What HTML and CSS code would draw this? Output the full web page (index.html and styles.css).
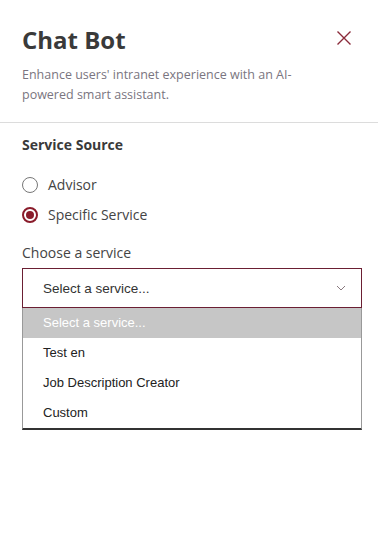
FILE: index.html
```html
<!DOCTYPE html>
<html>
<head>
<meta charset="utf-8">
<link rel="stylesheet" href="styles.css">
</head>
<body>
<div class="panel">
  <header class="head">
    <div class="title-row">
      <h1 class="title">Chat Bot</h1>
      <button class="close" aria-label="Close">
        <svg width="16" height="16" viewBox="0 0 16 16"><path d="M1.5 1.5 L14.5 14.5 M14.5 1.5 L1.5 14.5" stroke="#8a2a3a" stroke-width="1.4" fill="none"/></svg>
      </button>
    </div>
    <p class="desc">Enhance users' intranet experience with an AI-powered smart assistant.</p>
  </header>
  <section class="body">
    <h2 class="section-title">Service Source</h2>
    <div class="radios">
      <label class="radio"><span class="dot"></span>Advisor</label>
      <label class="radio checked"><span class="dot"></span>Specific Service</label>
    </div>
    <div class="field">
      <div class="field-label">Choose a service</div>
      <div class="select">
        <span>Select a service...</span>
        <svg width="10" height="6" viewBox="0 0 10 6"><path d="M1 1 L5 5 L9 1" stroke="#8a7a80" stroke-width="1" fill="none"/></svg>
      </div>
      <ul class="options">
        <li class="opt active">Select a service...</li>
        <li class="opt">Test en</li>
        <li class="opt">Job Description Creator</li>
        <li class="opt">Custom</li>
      </ul>
    </div>
  </section>
</div>
</body>
</html>
```
FILE: styles.css
```css
html, body { margin: 0; padding: 0; background: #fff; }
body { font-family: "Open Sans", sans-serif; color: #333; }
.panel { width: 378px; }
.head { padding: 24px 22px 17px 22px; border-bottom: 1px solid #dcdcdc; }
.title-row { display: flex; justify-content: space-between; align-items: flex-start; }
.title { margin: 0; font-size: 24px; font-weight: 700; color: #3a3a3a; line-height: 32px; }
.close { background: none; border: 0; padding: 0; margin: 6px 4px 0 0; width: 16px; height: 16px; cursor: pointer; }
.close svg { display: block; }
.desc { margin: 9px 0 0 0; font-size: 12.5px; line-height: 20px; color: #7a7580; width: 300px; }
.body { padding: 11px 16px 0 22px; }
.section-title { margin: 0; font-size: 14px; font-weight: 700; color: #3a3a3a; line-height: 22px; }
.radios { display: flex; flex-direction: column; gap: 8px; margin-top: 18px; }
.radio { display: flex; align-items: center; gap: 10px; font-size: 14px; color: #444; line-height: 22px; }
.dot { width: 16px; height: 16px; border: 1px solid #777; border-radius: 50%; box-sizing: border-box; flex: none; position: relative; }
.checked .dot { border: 2px solid #8a1c2b; }
.checked .dot::after { content: ""; position: absolute; left: 2px; top: 2px; width: 8px; height: 8px; border-radius: 50%; background: #8a1c2b; }
.field { margin-top: 16px; }
.field-label { font-size: 14px; color: #444; line-height: 22px; }
.select { margin-top: 4px; height: 38px; border: 1px solid #6b1f33; display: flex; align-items: center; justify-content: space-between; padding: 0 15px 0 20px; font-family: "Liberation Sans", Arial, sans-serif; font-size: 13.5px; color: #333; }
.options { list-style: none; margin: 0; padding: 0; border: 1px solid #999; border-top: 0; border-bottom: 2px solid #333; font-family: "Liberation Sans", Arial, sans-serif; font-size: 13px; color: #222; }
.opt { height: 30px; line-height: 30px; padding-left: 20px; }
.opt.active { background: #c6c6c6; color: #fff; }
```
